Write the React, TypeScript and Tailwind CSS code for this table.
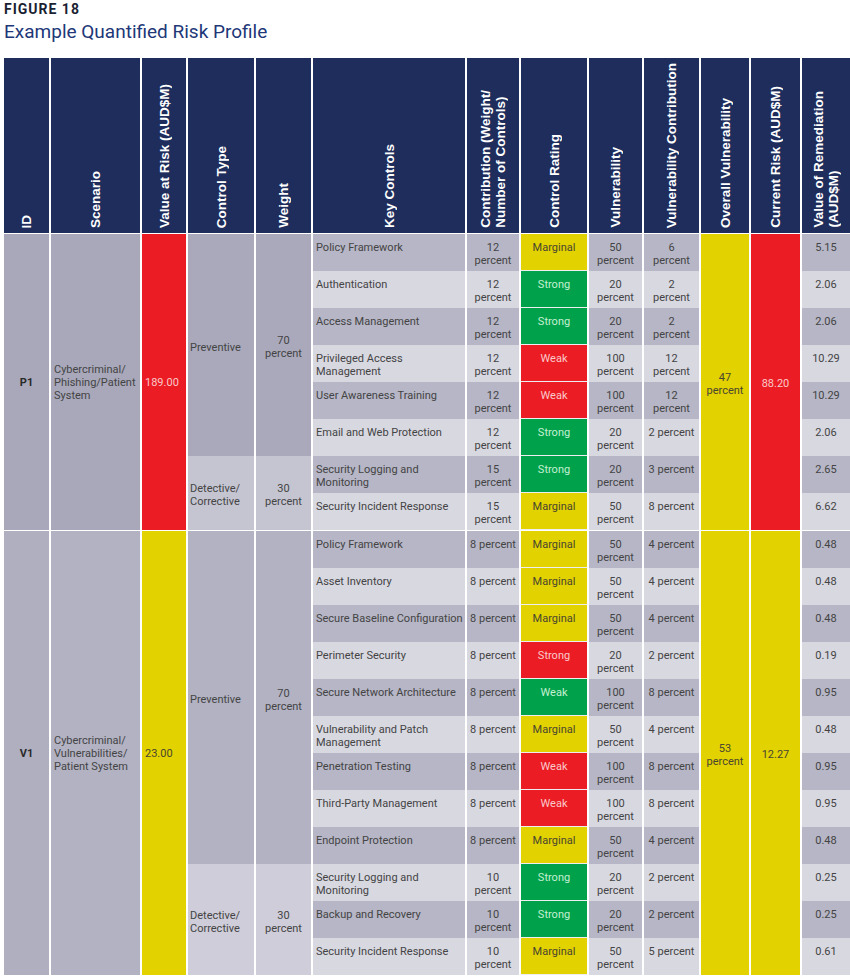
import React from 'react';

type Color = 'y' | 'g' | 'r';
type Row = { kc: string; co: string; rating: string; rc: Color; vu: string; vc: string; rem: string };
type Group = { type: string; weight: string; bg: string; rows: Row[] };
type Section = {
  id: string;
  idBg: string;
  scenario: string;
  scBg: string;
  varVal: string;
  varColor: Color;
  overall: string;
  ovColor: Color;
  current: string;
  curColor: Color;
  start: number;
  groups: Group[];
};

const H: Record<number, string> = {
  1: 'h-[37px]',
  2: 'h-[74px]',
  3: 'h-[111px]',
  6: 'h-[222px]',
  8: 'h-[296px]',
  9: 'h-[333px]',
  12: 'h-[444px]',
};

const FILL: Record<Color, string> = {
  y: 'bg-[#e2d200] text-[#4a4630]',
  g: 'bg-[#00a14b] text-[#c4f0d2]',
  r: 'bg-[#ec1c24] text-[#f9caca]',
};

const W = {
  id: 'w-[45px]',
  sc: 'w-[89px]',
  va: 'w-[44px]',
  ct: 'w-[66px]',
  wt: 'w-[55px]',
  kc: 'w-[152px]',
  co: 'w-[52px]',
  cr: 'w-[66px]',
  vu: 'w-[53px]',
  vc: 'w-[55px]',
  ov: 'w-[48px]',
  cu: 'w-[49px]',
  re: 'w-[48px]',
};

const headers: { w: string; t: string }[] = [
  { w: W.id, t: 'ID' },
  { w: W.sc, t: 'Scenario' },
  { w: W.va, t: 'Value at Risk (AUD$M)' },
  { w: W.ct, t: 'Control Type' },
  { w: W.wt, t: 'Weight' },
  { w: W.kc, t: 'Key Controls' },
  { w: W.co, t: 'Contribution (Weight/\nNumber of Controls)' },
  { w: W.cr, t: 'Control Rating' },
  { w: W.vu, t: 'Vulnerability' },
  { w: W.vc, t: 'Vulnerability Contribution' },
  { w: W.ov, t: 'Overall Vulnerability' },
  { w: W.cu, t: 'Current Risk (AUD$M)' },
  { w: W.re, t: 'Value of Remediation\n(AUD$M)' },
];

const p = '\npercent';

const sections: Section[] = [
  {
    id: 'P1',
    idBg: 'bg-[#a8a8ba]',
    scenario: 'Cybercriminal/\nPhishing/Patient\nSystem',
    scBg: 'bg-[#a8a8ba]',
    varVal: '189.00',
    varColor: 'r',
    overall: '47\npercent',
    ovColor: 'y',
    current: '88.20',
    curColor: 'r',
    start: 0,
    groups: [
      {
        type: 'Preventive',
        weight: '70\npercent',
        bg: 'bg-[#a9a9bb]',
        rows: [
          { kc: 'Policy Framework', co: '12' + p, rating: 'Marginal', rc: 'y', vu: '50' + p, vc: '6' + p, rem: '5.15' },
          { kc: 'Authentication', co: '12' + p, rating: 'Strong', rc: 'g', vu: '20' + p, vc: '2' + p, rem: '2.06' },
          { kc: 'Access Management', co: '12' + p, rating: 'Strong', rc: 'g', vu: '20' + p, vc: '2' + p, rem: '2.06' },
          { kc: 'Privileged Access\nManagement', co: '12' + p, rating: 'Weak', rc: 'r', vu: '100' + p, vc: '12' + p, rem: '10.29' },
          { kc: 'User Awareness Training', co: '12' + p, rating: 'Weak', rc: 'r', vu: '100' + p, vc: '12' + p, rem: '10.29' },
          { kc: 'Email and Web Protection', co: '12' + p, rating: 'Strong', rc: 'g', vu: '20' + p, vc: '2 percent', rem: '2.06' },
        ],
      },
      {
        type: 'Detective/\nCorrective',
        weight: '30\npercent',
        bg: 'bg-[#c5c5d2]',
        rows: [
          { kc: 'Security Logging and\nMonitoring', co: '15' + p, rating: 'Strong', rc: 'g', vu: '20' + p, vc: '3 percent', rem: '2.65' },
          { kc: 'Security Incident Response', co: '15' + p, rating: 'Marginal', rc: 'y', vu: '50' + p, vc: '8 percent', rem: '6.62' },
        ],
      },
    ],
  },
  {
    id: 'V1',
    idBg: 'bg-[#afafc0]',
    scenario: 'Cybercriminal/\nVulnerabilities/\nPatient System',
    scBg: 'bg-[#b2b2c3]',
    varVal: '23.00',
    varColor: 'y',
    overall: '53\npercent',
    ovColor: 'y',
    current: '12.27',
    curColor: 'y',
    start: 8,
    groups: [
      {
        type: 'Preventive',
        weight: '70\npercent',
        bg: 'bg-[#b2b2c3]',
        rows: [
          { kc: 'Policy Framework', co: '8 percent', rating: 'Marginal', rc: 'y', vu: '50' + p, vc: '4 percent', rem: '0.48' },
          { kc: 'Asset Inventory', co: '8 percent', rating: 'Marginal', rc: 'y', vu: '50' + p, vc: '4 percent', rem: '0.48' },
          { kc: 'Secure Baseline Configuration', co: '8 percent', rating: 'Marginal', rc: 'y', vu: '50' + p, vc: '4 percent', rem: '0.48' },
          { kc: 'Perimeter Security', co: '8 percent', rating: 'Strong', rc: 'r', vu: '20' + p, vc: '2 percent', rem: '0.19' },
          { kc: 'Secure Network Architecture', co: '8 percent', rating: 'Weak', rc: 'g', vu: '100' + p, vc: '8 percent', rem: '0.95' },
          { kc: 'Vulnerability and Patch\nManagement', co: '8 percent', rating: 'Marginal', rc: 'y', vu: '50' + p, vc: '4 percent', rem: '0.48' },
          { kc: 'Penetration Testing', co: '8 percent', rating: 'Weak', rc: 'r', vu: '100' + p, vc: '8 percent', rem: '0.95' },
          { kc: 'Third-Party Management', co: '8 percent', rating: 'Weak', rc: 'r', vu: '100' + p, vc: '8 percent', rem: '0.95' },
          { kc: 'Endpoint Protection', co: '8 percent', rating: 'Marginal', rc: 'y', vu: '50' + p, vc: '4 percent', rem: '0.48' },
        ],
      },
      {
        type: 'Detective/\nCorrective',
        weight: '30\npercent',
        bg: 'bg-[#cecdd9]',
        rows: [
          { kc: 'Security Logging and\nMonitoring', co: '10' + p, rating: 'Strong', rc: 'g', vu: '20' + p, vc: '2 percent', rem: '0.25' },
          { kc: 'Backup and Recovery', co: '10' + p, rating: 'Strong', rc: 'g', vu: '20' + p, vc: '2 percent', rem: '0.25' },
          { kc: 'Security Incident Response', co: '10' + p, rating: 'Marginal', rc: 'y', vu: '50' + p, vc: '5 percent', rem: '0.61' },
        ],
      },
    ],
  },
];

const stripe = (i: number) => (i % 2 === 0 ? 'bg-[#b6b6c6]' : 'bg-[#d8d8e1]');

function RowCol({
  w,
  rows,
  start,
  field,
  align,
}: {
  w: string;
  rows: Row[];
  start: number;
  field: 'kc' | 'co' | 'vu' | 'vc' | 'rem';
  align: string;
}) {
  return (
    <div className={`flex flex-col ${w}`}>
      {rows.map((r, i) => (
        <div key={i} className={`h-[37px] pt-[7px] whitespace-pre ${align} ${stripe(start + i)}`}>
          {r[field]}
        </div>
      ))}
    </div>
  );
}

function SectionBlock({ s }: { s: Section }) {
  const rows = s.groups.flatMap((g) => g.rows);
  const n = rows.length;
  return (
    <div className="flex gap-x-[2px]">
      <div className={`${W.id} ${H[n]} ${s.idBg} flex items-center justify-center font-bold text-[#2a2a2a]`}>{s.id}</div>
      <div className={`${W.sc} ${H[n]} ${s.scBg} flex items-center pl-[3px] whitespace-pre`}>{s.scenario}</div>
      <div className={`${W.va} ${H[n]} ${FILL[s.varColor]} flex items-center pl-[3px]`}>{s.varVal}</div>
      <div className={`flex flex-col ${W.ct}`}>
        {s.groups.map((g, i) => (
          <div key={i} className={`${H[g.rows.length]} ${g.bg} flex items-center pl-[2px] pt-[4px] whitespace-pre`}>
            {g.type}
          </div>
        ))}
      </div>
      <div className={`flex flex-col ${W.wt}`}>
        {s.groups.map((g, i) => (
          <div key={i} className={`${H[g.rows.length]} ${g.bg} flex items-center justify-center text-center pt-[4px] whitespace-pre`}>
            {g.weight}
          </div>
        ))}
      </div>
      <RowCol w={W.kc} rows={rows} start={s.start} field="kc" align="text-left pl-[3px]" />
      <RowCol w={W.co} rows={rows} start={s.start} field="co" align="text-center" />
      <div className={`flex flex-col ${W.cr}`}>
        {rows.map((r, i) => (
          <div key={i} className={`h-[37px] pt-[7px] text-center border-b border-[#eeeef2] ${FILL[r.rc]}`}>
            {r.rating}
          </div>
        ))}
      </div>
      <RowCol w={W.vu} rows={rows} start={s.start} field="vu" align="text-center" />
      <RowCol w={W.vc} rows={rows} start={s.start} field="vc" align="text-center" />
      <div className={`${W.ov} ${H[n]} ${FILL[s.ovColor]} flex items-center justify-center text-center whitespace-pre pt-[3px]`}>
        {s.overall}
      </div>
      <div className={`${W.cu} ${H[n]} ${FILL[s.curColor]} flex items-center justify-center pt-[3px]`}>{s.current}</div>
      <RowCol w={W.re} rows={rows} start={s.start} field="rem" align="text-center" />
    </div>
  );
}

export default function App() {
  return (
    <div className="w-[850px] h-[979px] overflow-hidden bg-white font-['Roboto',sans-serif]">
      <div className="pl-[4px] pt-[1px]">
        <div className="text-[14px] leading-[17px] font-bold tracking-[1px] text-[#1b1f33]">FIGURE 18</div>
        <div className="mt-[2px] text-[19px] leading-[24px] text-[#213778]">Example Quantified Risk Profile</div>
      </div>
      <div className="ml-[4px] mt-[14px] flex flex-col gap-y-[1px] text-[11px] leading-[13px] text-[#444444]">
        <div className="flex gap-x-[2px] h-[175px]">
          {headers.map((h, i) => (
            <div key={i} className={`${h.w} h-full bg-[#1e2d5c] flex items-end justify-center pb-[5px]`}>
              <span className="[writing-mode:vertical-rl] rotate-180 whitespace-pre text-white font-bold text-[13.5px] leading-[15px] font-['Liberation_Sans',Arial,sans-serif]">
                {h.t}
              </span>
            </div>
          ))}
        </div>
        {sections.map((s) => (
          <SectionBlock key={s.id} s={s} />
        ))}
      </div>
    </div>
  );
}
